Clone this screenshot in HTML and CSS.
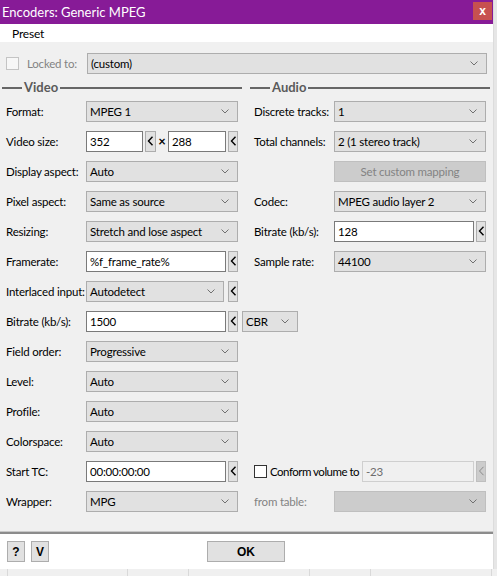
FILE: index.html
```html
<!DOCTYPE html>
<html>
<head>
<meta charset="utf-8">
<link rel="stylesheet" href="styles.css">
</head>
<body>
<div class="screen">
  <div class="window">
    <div class="titlebar">
      <span class="title">Encoders: Generic MPEG</span>
      <span class="close">x</span>
    </div>
    <div class="menubar"><span class="menu">Preset</span></div>
    <div class="content">
      <div class="locked">
        <span class="check disabled"></span>
        <span class="locked-label">Locked to:</span>
        <div class="select wide"><span>(custom)</span><svg class="chev" viewBox="0 0 8 5"><path d="M0.5 0.5 L4 4 L7.5 0.5"/></svg></div>
      </div>
      <div class="groups">
        <div class="col">
          <div class="ghead"><span class="gline short"></span><span class="gtitle">Video</span><span class="gline"></span></div>
          <div class="row"><span class="label">Format:</span><div class="select"><span>MPEG 1</span><svg class="chev" viewBox="0 0 8 5"><path d="M0.5 0.5 L4 4 L7.5 0.5"/></svg></div></div>
          <div class="row"><span class="label">Video size:</span>
            <div class="input w57">352</div><div class="btn w11"><svg viewBox="0 0 7 10"><path d="M5.5 0.8 L1.5 5 L5.5 9.2"/></svg></div>
            <span class="times">×</span>
            <div class="input w58">288</div><div class="btn"><svg viewBox="0 0 7 10"><path d="M5.5 0.8 L1.5 5 L5.5 9.2"/></svg></div>
          </div>
          <div class="row"><span class="label">Display aspect:</span><div class="select"><span>Auto</span><svg class="chev" viewBox="0 0 8 5"><path d="M0.5 0.5 L4 4 L7.5 0.5"/></svg></div></div>
          <div class="row"><span class="label">Pixel aspect:</span><div class="select"><span>Same as source</span><svg class="chev" viewBox="0 0 8 5"><path d="M0.5 0.5 L4 4 L7.5 0.5"/></svg></div></div>
          <div class="row"><span class="label">Resizing:</span><div class="select"><span>Stretch and lose aspect</span><svg class="chev" viewBox="0 0 8 5"><path d="M0.5 0.5 L4 4 L7.5 0.5"/></svg></div></div>
          <div class="row"><span class="label">Framerate:</span><div class="input w140">%f_frame_rate%</div><div class="btn"><svg viewBox="0 0 7 10"><path d="M5.5 0.8 L1.5 5 L5.5 9.2"/></svg></div></div>
          <div class="row"><span class="label">Interlaced input:</span><div class="select w138"><span>Autodetect</span><svg class="chev" viewBox="0 0 8 5"><path d="M0.5 0.5 L4 4 L7.5 0.5"/></svg></div><div class="btn gap4"><svg viewBox="0 0 7 10"><path d="M5.5 0.8 L1.5 5 L5.5 9.2"/></svg></div></div>
          <div class="row"><span class="label">Bitrate (kb/s):</span><div class="input w140">1500</div><div class="btn"><svg viewBox="0 0 7 10"><path d="M5.5 0.8 L1.5 5 L5.5 9.2"/></svg></div>
            <div class="select cbr"><span>CBR</span><svg class="chev" viewBox="0 0 8 5"><path d="M0.5 0.5 L4 4 L7.5 0.5"/></svg></div></div>
          <div class="row"><span class="label">Field order:</span><div class="select"><span>Progressive</span><svg class="chev" viewBox="0 0 8 5"><path d="M0.5 0.5 L4 4 L7.5 0.5"/></svg></div></div>
          <div class="row"><span class="label">Level:</span><div class="select"><span>Auto</span><svg class="chev" viewBox="0 0 8 5"><path d="M0.5 0.5 L4 4 L7.5 0.5"/></svg></div></div>
          <div class="row"><span class="label">Profile:</span><div class="select"><span>Auto</span><svg class="chev" viewBox="0 0 8 5"><path d="M0.5 0.5 L4 4 L7.5 0.5"/></svg></div></div>
          <div class="row"><span class="label">Colorspace:</span><div class="select"><span>Auto</span><svg class="chev" viewBox="0 0 8 5"><path d="M0.5 0.5 L4 4 L7.5 0.5"/></svg></div></div>
          <div class="row"><span class="label">Start TC:</span><div class="input w140">00:00:00:00</div><div class="btn"><svg viewBox="0 0 7 10"><path d="M5.5 0.8 L1.5 5 L5.5 9.2"/></svg></div></div>
          <div class="row"><span class="label">Wrapper:</span><div class="select"><span>MPG</span><svg class="chev" viewBox="0 0 8 5"><path d="M0.5 0.5 L4 4 L7.5 0.5"/></svg></div></div>
        </div>
        <div class="col">
          <div class="ghead"><span class="gline short"></span><span class="gtitle">Audio</span><span class="gline"></span></div>
          <div class="row"><span class="label">Discrete tracks:</span><div class="select"><span>1</span><svg class="chev" viewBox="0 0 8 5"><path d="M0.5 0.5 L4 4 L7.5 0.5"/></svg></div></div>
          <div class="row"><span class="label">Total channels:</span><div class="select"><span>2 (1 stereo track)</span><svg class="chev" viewBox="0 0 8 5"><path d="M0.5 0.5 L4 4 L7.5 0.5"/></svg></div></div>
          <div class="row"><span class="label"></span><div class="pbtn disabled">Set custom mapping</div></div>
          <div class="row"><span class="label">Codec:</span><div class="select"><span>MPEG audio layer 2</span><svg class="chev" viewBox="0 0 8 5"><path d="M0.5 0.5 L4 4 L7.5 0.5"/></svg></div></div>
          <div class="row"><span class="label">Bitrate (kb/s):</span><div class="input w140">128</div><div class="btn"><svg viewBox="0 0 7 10"><path d="M5.5 0.8 L1.5 5 L5.5 9.2"/></svg></div></div>
          <div class="row"><span class="label">Sample rate:</span><div class="select"><span>44100</span><svg class="chev" viewBox="0 0 8 5"><path d="M0.5 0.5 L4 4 L7.5 0.5"/></svg></div></div>
          <div class="spacer"></div>
          <div class="row"><span class="check"></span><span class="conform">Conform volume to</span><div class="input disabled w112">-23</div><div class="btn disabled"><svg viewBox="0 0 7 10"><path d="M5.5 0.8 L1.5 5 L5.5 9.2"/></svg></div></div>
          <div class="row"><span class="label dim">from table:</span><div class="select disabled"><span></span><svg class="chev" viewBox="0 0 8 5"><path d="M0.5 0.5 L4 4 L7.5 0.5"/></svg></div></div>
        </div>
      </div>
    </div>
    <div class="footer">
      <div class="fbtn sq">?</div>
      <div class="fbtn sq">V</div>
      <div class="fbtn ok">OK</div>
    </div>
  </div>
  <div class="edge"></div>
</div>
<div class="strip">
  <span class="cell c1"></span><span class="cell c2"></span><span class="cell c3"></span><span class="cell c4"></span><span class="cell c5"></span><span class="cell c6"></span><span class="cell c7"></span>
</div>
</body>
</html>
```

FILE: styles.css
```css
html, body {
  margin: 0;
  padding: 0;
  background: #f0f0f0;
  font-family: "Lato", "Liberation Sans", sans-serif;
  font-size: 11.5px;
  letter-spacing: -0.2px;
  color: #000;
}
.screen {
  display: flex;
  height: 569px;
}
.window {
  width: 494px;
  height: 569px;
  display: flex;
  flex-direction: column;
  background: #f0f0f0;
}
.edge {
  width: 3px;
  background: #e6e6e6;
  border-left: 1px solid #dcdcdc;
}
.titlebar {
  height: 24px;
  background: #871b97;
  display: flex;
  align-items: center;
  justify-content: space-between;
  padding-left: 2px;
}
.title {
  color: #fff;
  font-size: 13px;
  letter-spacing: 0;
}
.close {
  width: 19px;
  height: 18px;
  margin-right: 1px;
  margin-top: -2px;
  background: #c75050;
  color: #fff;
  font-weight: bold;
  font-size: 12px;
  display: flex;
  align-items: center;
  justify-content: center;
  font-family: "Liberation Sans", sans-serif;
}
.menubar {
  height: 18px;
  background: #fff;
  display: flex;
  align-items: center;
  padding-left: 12px;
  font-size: 12px;
}
.content {
  flex: 1;
  padding-top: 11px;
}
.locked {
  display: flex;
  align-items: center;
  height: 21px;
  padding-left: 6px;
}
.check {
  width: 11px;
  height: 11px;
  border: 1px solid #333;
  background: #fff;
  flex-shrink: 0;
}
.check.disabled {
  border-color: #c4c4c4;
  background: #f7f7f7;
}
.locked-label {
  color: #838383;
  margin-left: 8px;
  width: 60px;
}
.select {
  width: 139px;
  height: 19px;
  border: 1px solid #adadad;
  background: #e1e1e1;
  display: flex;
  align-items: center;
  justify-content: space-between;
  padding: 0 8px 0 3px;
  box-sizing: content-box;
  flex-shrink: 0;
}
.select.wide {
  width: 387px;
}
.select.w138 {
  width: 125px;
}
.select.cbr {
  width: 43px;
  margin-left: 4px;
}
.select.disabled {
  background: #cccccc;
  border-color: #bfbfbf;
}
.chev {
  width: 8px;
  height: 5px;
  fill: none;
  stroke: #707070;
  stroke-width: 1;
}
.groups {
  display: grid;
  grid-template-columns: 240px 240px;
  column-gap: 8px;
  padding-left: 2px;
  margin-top: 5px;
}
.col {
  display: flex;
  flex-direction: column;
}
.ghead {
  height: 17px;
  display: flex;
  align-items: center;
}
.gline {
  flex: 1;
  height: 2px;
  background: #666;
}
.gline.short {
  flex: 0 0 20px;
}
.gtitle {
  color: #5a5a5a;
  font-weight: bold;
  font-size: 13px;
  letter-spacing: 0;
  padding: 0 2px;
  margin-top: -1px;
}
.row {
  height: 30px;
  display: flex;
  align-items: center;
  padding-left: 4px;
  white-space: nowrap;
}
.label {
  width: 80px;
  flex-shrink: 0;
}
.label.dim {
  color: #838383;
}
.input {
  border: 1px solid #7a7a7a;
  background: #fff;
  display: flex;
  align-items: center;
  padding-left: 3px;
  box-sizing: border-box;
  height: 21px;
  flex-shrink: 0;
}
.input.w57 { width: 57px; }
.input.w58 { width: 58px; }
.input.w140 { width: 140px; }
.input.w112 { width: 112px; }
.input.disabled {
  background: #f0f0f0;
  border-color: #cfcfcf;
  color: #6d6d6d;
}
.btn {
  width: 10px;
  height: 21px;
  margin-left: 2px;
  box-sizing: border-box;
  border: 1px solid #adadad;
  background: #e1e1e1;
  display: flex;
  align-items: center;
  justify-content: center;
  flex-shrink: 0;
}
.btn.w11 { width: 11px; }
.btn.gap4 { margin-left: 4px; }
.btn svg {
  width: 7px;
  height: 10px;
  fill: none;
  stroke: #000;
  stroke-width: 1.4;
}
.btn.disabled {
  background: #cccccc;
  border-color: #bfbfbf;
}
.btn.disabled svg {
  stroke: #8a8a8a;
  stroke-width: 1;
}
.times {
  width: 12px;
  text-align: center;
  flex-shrink: 0;
  font-size: 13px;
  font-weight: bold;
}
.pbtn {
  width: 152px;
  height: 21px;
  box-sizing: border-box;
  display: flex;
  align-items: center;
  justify-content: center;
  flex-shrink: 0;
}
.pbtn.disabled {
  background: #cccccc;
  border: 1px solid #bfbfbf;
  color: #838383;
}
.spacer {
  flex: 1;
}
.conform {
  margin-left: 3px;
  width: 92px;
  letter-spacing: -0.5px;
  flex-shrink: 0;
}
.footer {
  height: 35px;
  background: #fff;
  border-top: 2px solid #8c8c8c;
  box-shadow: 0 -1px 0 #c8c8c8;
  display: flex;
  align-items: center;
  padding-left: 7px;
  gap: 6px;
}
.fbtn {
  height: 21px;
  box-sizing: border-box;
  border: 1px solid #adadad;
  background: #e1e1e1;
  font-weight: bold;
  font-size: 12px;
  letter-spacing: 0;
  font-family: "Liberation Sans", sans-serif;
  display: flex;
  align-items: center;
  justify-content: center;
}
.fbtn.sq {
  width: 18px;
}
.fbtn.ok {
  width: 78px;
  margin-left: 152px;
}
.strip {
  height: 7px;
  display: flex;
  background: #f0f0f0;
}
.cell {
  height: 7px;
  border-left: 1px solid #d9d9d9;
}
.c1 { width: 7px; border-left: none; }
.c2 { width: 119px; }
.c3 { width: 60px; }
.c4 { width: 120px; }
.c5 { width: 60px; }
.c6 { width: 120px; }
.c7 { flex: 1; }
```
